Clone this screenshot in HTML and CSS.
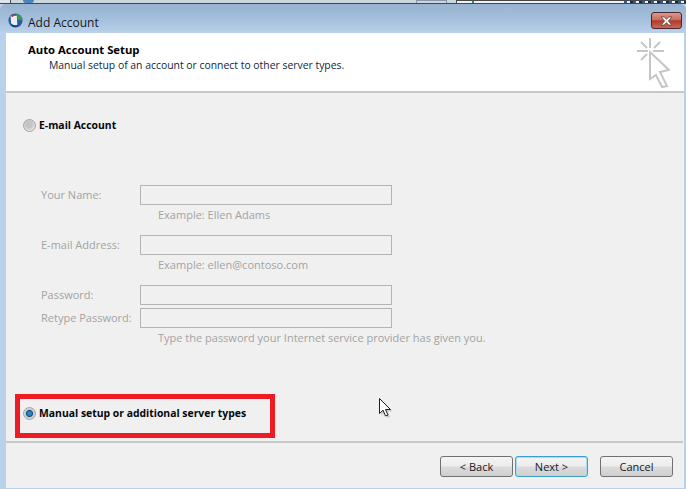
FILE: index.html
```html
<!DOCTYPE html>
<html lang="en">
<head>
<meta charset="utf-8">
<title>Add Account</title>
<link rel="stylesheet" href="styles.css">
</head>
<body>
<div class="desktop-strip">
  <span class="strip-corner"></span>
  <span class="strip-globe"></span>
  <span class="strip-tab"></span>
  <span class="strip-app"><i class="strip-green"></i><i class="strip-colors"></i></span>
</div>
<div class="window">
  <div class="titlebar">
    <div class="title-left">
      <svg class="app-icon" width="15" height="15" viewBox="0 0 17 17">
        <circle cx="8.5" cy="8.5" r="8" fill="#2d5f96"/>
        <path d="M9 1 A7.500 7.500 0 0 1 16 8 L11 8 Z" fill="#3d9a4a"/>
        <path d="M3 3.500 L10 3 L10.500 13.500 Q6 15 3.500 12 Z" fill="#e8eef6"/>
        <rect x="4" y="1.500" width="2" height="3" fill="#c8382e"/>
        <path d="M2 11 Q7 16 13 13 Q9 17 5.500 15.500 Z" fill="#123f78"/>
      </svg>
      <span class="title-text">Add Account</span>
    </div>
    <button class="close-btn" type="button" aria-label="Close">
      <svg width="13" height="10" viewBox="0 0 12 9"><path d="M1 .7 L3.800 .7 L6 2.800 L8.200 .7 L11 .7 L7.800 4.500 L11 8.300 L8.200 8.300 L6 6.200 L3.800 8.300 L1 8.300 L4.200 4.500 Z" fill="#f4f4f4" stroke="#5a3a3a" stroke-width=".7"/></svg>
    </button>
  </div>
  <div class="client">
    <header class="header">
      <div class="header-text">
        <h1 class="header-title">Auto Account Setup</h1>
        <p class="header-sub">Manual setup of an account or connect to other server types.</p>
      </div>
      <svg class="wizard-icon" width="36" height="54" viewBox="0 0 36 54" fill="none" stroke="#c6c6c6" stroke-width="2">
        <path d="M16 2 V12 M3 15 H14 M19 15 H30 M7 6 L13 12 M26 6 L20 12 M7 24 L13 18"/>
        <path d="M16 16 L35 34 L26 36 L33 50 L28 51 L22 39 L16 43 Z" stroke-linejoin="miter"/>
      </svg>
    </header>
    <main class="form">
      <label class="radio-row radio-email"><span class="radio"></span><span class="radio-label">E-mail Account</span></label>
      <div class="fields">
        <span class="field-label">Your Name:</span><span class="input"></span>
        <span class="example">Example: Ellen Adams</span>
        <span class="field-label">E-mail Address:</span><span class="input"></span>
        <span class="example">Example: ellen@contoso.com</span>
        <span class="field-label">Password:</span><span class="input"></span>
        <span class="field-label">Retype Password:</span><span class="input"></span>
        <span class="example">Type the password your Internet service provider has given you.</span>
      </div>
      <div class="manual-box">
        <label class="radio-row"><span class="radio radio-on"></span><span class="radio-label">Manual setup or additional server types</span></label>
      </div>
      <svg class="pointer" width="16" height="22" viewBox="0 0 16 22">
        <path d="M2 2 V17 L5.500 14 L8 19.500 L10.500 18.500 L8 13 L13 13 Z" fill="#8a8a8a" opacity=".35" transform="translate(1.500 1.500)"/>
        <path d="M1.500 1.500 V16.500 L5 13.200 L7.500 19 L10 18 L7.500 12.500 L12.500 12.500 Z" fill="#fff" stroke="#1c1c28" stroke-width="1"/>
      </svg>
    </main>
    <footer class="footer">
      <button class="btn btn-back" type="button">&lt; Back</button>
      <button class="btn btn-next" type="button">Next &gt;</button>
      <button class="btn btn-cancel" type="button">Cancel</button>
    </footer>
  </div>
</div>
</body>
</html>
```
FILE: styles.css
```css
* { box-sizing: border-box; }
html, body { margin: 0; padding: 0; }
body {
  width: 686px;
  height: 489px;
  overflow: hidden;
  background: #b9d1ea;
  font-family: "Open Sans", "Noto Sans", sans-serif;
  font-size: 11px;
  display: flex;
  flex-direction: column;
}
.desktop-strip {
  position: relative;
  height: 4px;
  flex: none;
  background: #cbd7de;
  border-bottom: 1px solid #45484c;
}
.strip-corner {
  position: absolute; left: 0; top: 0; width: 11px; height: 3px;
  border-right: 1px solid #45484c; background: #dfe4e8;
}
.strip-globe {
  position: absolute; left: 23px; top: 0; width: 11px; height: 3px;
  background: #4a86b8; border-radius: 0 0 6px 6px;
}
.strip-tab {
  position: absolute; left: 416px; top: 0; width: 31px; height: 3px;
  border: 1px solid #8a94a8; border-bottom: 0; background: #cbd7de;
}
.strip-app {
  position: absolute; left: 456px; right: 0; top: 0; height: 3px;
  background: #f2f2f2; border-left: 1px solid #45484c; border-top: 1px solid #45484c;
}
.strip-green { position: absolute; left: 15px; top: 0; width: 2px; height: 2px; background: #2f9a3c; }
.strip-colors {
  position: absolute; right: 0; top: 0; width: 62px; height: 2px;
  background: repeating-linear-gradient(90deg, #2d5f96 0 3px, #f4f4f4 3px 6px, #1c2a44 6px 9px);
}
.window {
  flex: 1;
  display: flex;
  flex-direction: column;
  border-radius: 6px 6px 0 0;
  overflow: hidden;
  background: #b9d1ea;
}
.titlebar {
  height: 29px;
  flex: none;
  display: flex;
  align-items: center;
  justify-content: space-between;
  padding: 4px 4px 0 8px;
  background: linear-gradient(180deg, #97b3d0 0%, #a5c0dc 55%, #b9d1ea 100%);
}
.title-left { display: flex; align-items: center; gap: 5px; }
.app-icon { display: block; }
.title-text { font-size: 12px; color: #15191f; padding-top: 3px; }
.close-btn {
  width: 31px;
  height: 17px;
  padding: 0;
  display: flex;
  align-items: center;
  justify-content: center;
  border: 1px solid #4a2530;
  border-radius: 3px;
  background: linear-gradient(180deg, #d99a8e 0%, #cb6d5d 45%, #b43a28 52%, #c9685a 100%);
}
.client {
  flex: 1;
  margin: 0 2px 1px 6px;
  display: flex;
  flex-direction: column;
  background: #f0f0f0;
}
.header {
  height: 60px;
  flex: none;
  display: flex;
  justify-content: space-between;
  background: #fff;
  border-bottom: 2px solid #c8c8c8;
  padding: 0 14px 0 22px;
}
.header-title {
  margin: 9px 0 0;
  font-size: 11.300px;
  line-height: 16px;
  font-weight: 700;
  color: #000;
}
.header-sub {
  margin: 0 0 0 21px;
  font-size: 10.400px;
  line-height: 14px;
  color: #0f1f40;
}
.wizard-icon { margin-top: 3px; display: block; }
.form {
  position: relative;
  flex: 1;
  padding: 24px 0 0 17px;
}
.radio-row { display: flex; align-items: center; gap: 3px; height: 16px; }
.radio {
  width: 13px;
  height: 13px;
  flex: none;
  border-radius: 50%;
  border: 1px solid #a2a2a2;
  background: radial-gradient(circle at 45% 40%, #c4c4c4 0 35%, #e4e4e4 70%, #f6f6f6 100%);
}
.radio-on {
  background: radial-gradient(circle, #2c86c0 0 22%, #0e4f86 40%, #c8c8c8 50%, #ececec 100%);
}
.radio-label { font-weight: 700; color: #05060a; font-size: 10.400px; line-height: 14px; }
.fields {
  display: grid;
  grid-template-columns: 99px 252px;
  margin: 52px 0 0 18px;
  color: #a3a3a3;
  font-size: 11px;
}
.field-label { height: 20px; line-height: 19px; margin-bottom: 3px; white-space: nowrap; }
.input {
  height: 20px;
  margin-bottom: 3px;
  border: 1px solid #b4b4b4;
  background: #f0f0f0;
}
.example {
  grid-column: 2 / 3;
  padding-left: 18px;
  height: 27px;
  line-height: 13px;
  white-space: nowrap;
}
.manual-box {
  position: absolute;
  left: 9px;
  top: 301px;
  width: 260px;
  height: 44px;
  border: 5px solid #ed1c24;
  padding: 6px 0 0 3px;
}
.pointer { position: absolute; left: 372px; top: 304px; }
.footer {
  height: 47px;
  flex: none;
  margin-right: 1px;
  border-top: 2px solid #c8c8c8;
  display: flex;
  padding: 13px 0 0 434px;
  gap: 2px;
}
.btn {
  width: 73px;
  height: 21px;
  padding: 0;
  font-family: inherit;
  font-size: 11px;
  color: #15191f;
  border: 1px solid #707070;
  border-radius: 3px;
  background: linear-gradient(180deg, #f4f4f4 0%, #ececec 48%, #dcdcdc 52%, #cfcfcf 100%);
}
.btn-next {
  border-color: #3c9fd0;
  box-shadow: inset 0 0 0 1px #a8dcf2;
}
.btn-cancel { margin-left: 10px; }
```
